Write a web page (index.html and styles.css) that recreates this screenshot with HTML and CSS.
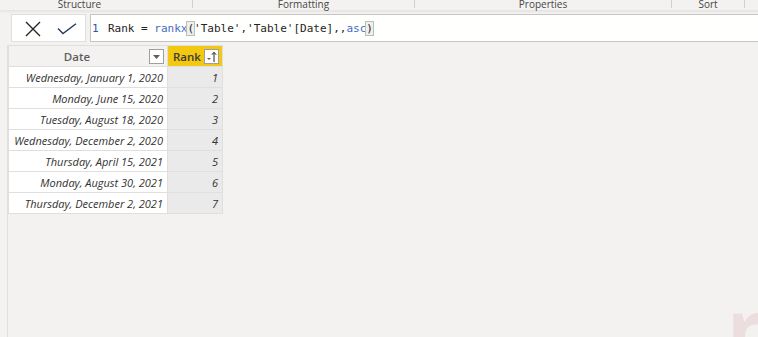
FILE: index.html
```html
<!DOCTYPE html>
<html>
<head>
<meta charset="utf-8">
<link rel="stylesheet" href="styles.css">
</head>
<body>
<div class="ribbon">
  <div class="rsec rsec-structure">Structure</div>
  <div class="rsec rsec-formatting">Formatting</div>
  <div class="rsec rsec-properties">Properties</div>
  <div class="rsec rsec-sort">Sort</div>
  <div class="rsec rsec-rest"></div>
</div>
<div class="formula-row">
  <div class="commit-box">
    <svg class="icon-x" width="16" height="16" viewBox="0 0 16 16"><path d="M1 1 L15 15 M15 1 L1 15" stroke="#252423" stroke-width="1.4" fill="none"/></svg>
    <svg class="icon-check" width="20" height="12" viewBox="0 0 20 12"><path d="M1 5.5 L6 10.5 L19 0.8" stroke="#243a5e" stroke-width="1.4" fill="none"/></svg>
  </div>
  <div class="formula-box">
    <span class="ln">1</span><span class="code">Rank = <span class="kw">rankx</span><span class="br">(</span>'Table','Table'[Date],,<span class="kw">asc</span><span class="br">)</span></span>
  </div>
</div>
<div class="content">
  <table class="grid">
    <thead>
      <tr>
        <th class="h-date"><span class="h-label">Date</span><span class="hbtn"><svg width="7" height="4" viewBox="0 0 7 4"><path d="M0 0 L7 0 L3.5 4 Z" fill="#605e5c"/></svg></span></th>
        <th class="h-rank"><span class="h-label">Rank</span><span class="hbtn hbtn-sort"><svg width="11" height="12" viewBox="0 0 11 12"><path d="M1 7 L5 7 L3 9 Z" fill="#605e5c"/><path d="M8 11 L8 1.5 M5.8 3.8 L8 1.3 L10.2 3.8" stroke="#252423" stroke-width="1" fill="none"/></svg></span></th>
      </tr>
    </thead>
    <tbody>
      <tr><td class="c-date">Wednesday, January 1, 2020</td><td class="c-rank">1</td></tr>
      <tr><td class="c-date">Monday, June 15, 2020</td><td class="c-rank">2</td></tr>
      <tr><td class="c-date">Tuesday, August 18, 2020</td><td class="c-rank">3</td></tr>
      <tr><td class="c-date">Wednesday, December 2, 2020</td><td class="c-rank">4</td></tr>
      <tr><td class="c-date">Thursday, April 15, 2021</td><td class="c-rank">5</td></tr>
      <tr><td class="c-date">Monday, August 30, 2021</td><td class="c-rank">6</td></tr>
      <tr><td class="c-date">Thursday, December 2, 2021</td><td class="c-rank">7</td></tr>
    </tbody>
  </table>
</div>
<div class="watermark"><span class="wm-glyph">r</span></div>
</body>
</html>
```
FILE: styles.css
```css
html, body {
  margin: 0;
  padding: 0;
  overflow: hidden;
}
body {
  width: 758px;
  height: 337px;
  background: #f3f2f1;
  font-family: "Open Sans", "Noto Sans", sans-serif;
  color: #252423;
  position: relative;
}
.ribbon {
  display: flex;
  height: 10px;
  border-bottom: 1px solid #e8e6e4;
  box-shadow: 0 1px 2px rgba(0,0,0,0.06);
}
.rsec {
  font-size: 10px;
  line-height: 8px;
  color: #484644;
  text-align: center;
  border-right: 1px solid #d2d0ce;
  height: 8px;
  box-sizing: border-box;
}
.rsec-structure { width: 193px; padding-right: 33px; }
.rsec-formatting { width: 222px; }
.rsec-properties { width: 257px; }
.rsec-sort { width: 73px; }
.rsec-rest { flex: 1; border-right: none; }

.formula-row {
  display: flex;
  gap: 4px;
  margin-top: 3px;
  padding-left: 11px;
  height: 28px;
}
.commit-box {
  width: 75px;
  box-sizing: border-box;
  background: #fff;
  border: 1px solid #e1dfdd;
  display: flex;
  align-items: center;
  padding-left: 13px;
  gap: 16px;
}
.icon-x { margin-top: 1px; }
.icon-check { margin-top: 2px; }
.formula-box {
  flex: 1;
  margin-right: -4px;
  background: #fffffd;
  border: 1px solid #c8c6c4;
  display: flex;
  align-items: center;
  font-family: "DejaVu Sans Mono", "Liberation Mono", monospace;
  font-size: 11px;
  color: #252423;
  white-space: pre;
  padding-left: 1px;
}
.ln {
  color: #2b57a8;
  width: 16px;
}
.kw { color: #3f6ec6; }
.br {
  background: #eef0ec;
  outline: 1px solid #b8c0b8;
}

.content {
  margin-top: 3px;
  margin-left: 7px;
  border-left: 1px solid #e1dfdd;
  height: 292px;
}
.grid {
  border-collapse: collapse;
  font-size: 11px;
}
.grid th, .grid td {
  border: 1px solid #e1dfdd;
  height: 21px;
  padding: 0;
  box-sizing: border-box;
}
.grid th {
  font-weight: 600;
  font-size: 11.5px;
  position: relative;
}
.h-date {
  width: 159px;
  background: #f3f2f1;
  color: #605e5c;
  text-align: center;
}
.h-date .h-label { margin-right: 22px; }
.h-rank {
  width: 55px;
  background: #f2c811;
  color: #3b3a39;
  text-align: left;
  padding-left: 5px !important;
}
.hbtn {
  position: absolute;
  top: 3px;
  right: 3px;
  width: 13px;
  height: 13px;
  background: #fff;
  border: 1px solid #a19f9d;
  display: flex;
  align-items: center;
  justify-content: center;
}
.c-date {
  background: #fff;
  text-align: right;
  font-style: italic;
  padding-right: 4px !important;
  color: #323130;
}
.c-rank {
  background: #ebeaea;
  text-align: right;
  font-style: italic;
  padding-right: 4px !important;
  color: #323130;
}
.watermark {
  position: absolute;
  right: 0;
  bottom: 0;
  width: 30px;
  height: 24px;
  overflow: hidden;
}
.wm-glyph {
  position: absolute;
  left: -1px;
  top: -26px;
  font-family: "Open Sans", sans-serif;
  font-weight: 700;
  font-size: 80px;
  color: #ecdede;
  line-height: 1;
}
```
